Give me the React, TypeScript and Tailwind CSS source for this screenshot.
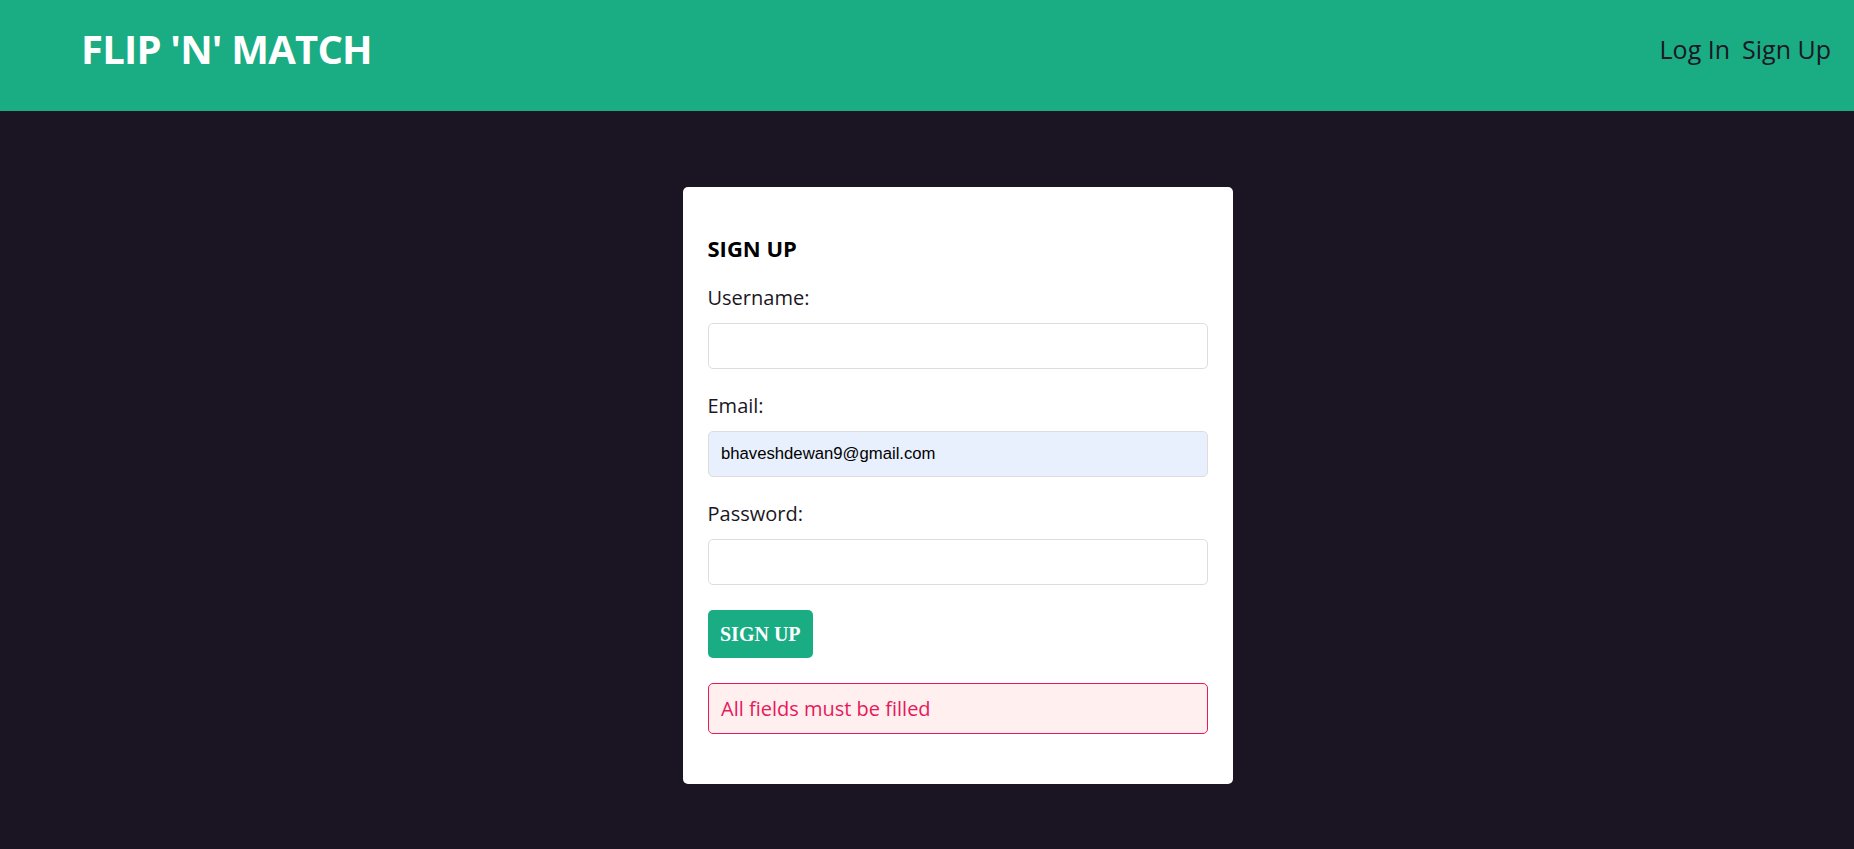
import React from 'react';

const raleway = { fontFamily: '"Open Sans", "Liberation Sans", sans-serif' };

const Field = ({ label, type, value }: { label: string; type: string; value?: string }) => (
  <>
    <label className="block text-[20px] leading-[24.5px] text-[#1b1725]">{label}</label>
    <input
      type={type}
      defaultValue={value}
      className={`mt-[12.5px] mb-[25px] block h-[46px] w-full rounded-[5px] border border-[#dddddd] px-[12.5px] text-[16.7px] text-black outline-none ${
        value ? 'bg-[#e8f0fe]' : 'bg-white'
      }`}
      style={{ fontFamily: '"Liberation Sans", Arial, sans-serif' }}
    />
  </>
);

export default function App() {
  return (
    <div className="min-h-screen bg-[#1b1523]" style={raleway}>
      <header className="flex h-[111px] items-center justify-between bg-[#1aac83] pl-[81px] pr-[23px]">
        <h1 className="mb-[14px] text-[40px] font-bold tracking-[-0.8px] text-white">FLIP 'N' MATCH</h1>
        <nav className="mb-[12px] flex items-center gap-[12px] text-[25px] text-[#1b1725]">
          <a href="#">Log In</a>
          <a href="#">Sign Up</a>
        </nav>
      </header>

      <div className="flex justify-center pt-[76px] pb-[40px] pl-[61px]">
        <form className="w-[550px] rounded-[5px] bg-white p-[25px]" onSubmit={(e) => e.preventDefault()}>
          <h3 className="my-[23.4px] text-[22px] leading-[27.5px] font-bold text-black">SIGN UP</h3>

          <Field label="Username:" type="text" />
          <Field label="Email:" type="email" value="bhaveshdewan9@gmail.com" />
          <Field label="Password:" type="password" />

          <button
            className="block rounded-[5px] bg-[#1aac83] px-[12.5px] py-[12.5px] text-[20px] leading-[23px] font-bold text-white"
            style={{ fontFamily: '"Liberation Serif", "Times New Roman", serif' }}
          >
            SIGN UP
          </button>

          <div className="my-[25px] rounded-[5px] border border-[#e7195a] bg-[#ffefef] px-[12.5px] py-[12.5px] text-[20px] leading-[24px] text-[#e7195a]">
            All fields must be filled
          </div>
        </form>
      </div>
    </div>
  );
}
